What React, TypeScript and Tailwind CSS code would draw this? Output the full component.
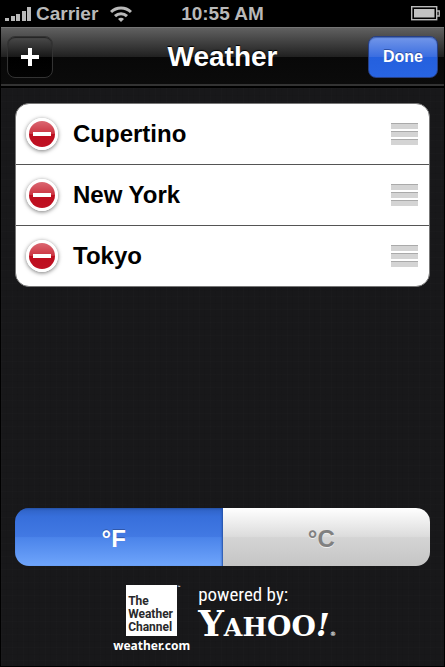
import { useState } from "react";

const cities = ["Cupertino", "New York", "Tokyo"];

function StatusBar() {
  return (
    <div className="grid h-[27px] grid-cols-[1fr_auto_1fr] items-center bg-black pr-1 pl-1 text-[19px] leading-none font-bold text-[#b9b9b9]">
      <div className="flex items-center">
        <svg width="27" height="14" viewBox="0 0 27 14" fill="#b9b9b9" aria-label="Signal strength" role="img">
          <rect x="0" y="11" width="4" height="3" />
          <rect x="6" y="9" width="4" height="5" />
          <rect x="11" y="7" width="4" height="7" />
          <rect x="17" y="4" width="4" height="10" />
          <rect x="22" y="0" width="4" height="14" />
        </svg>
        <span className="ml-1">Carrier</span>
        <svg className="ml-3" width="22" height="16" viewBox="0 0 22 16" fill="none" stroke="#b9b9b9" strokeWidth="3" aria-label="Wi-Fi" role="img">
          <path d="M1 6C6.500 0.600 15.500 0.600 21 6" />
          <path d="M5 10.200C8.500 6.800 13.500 6.800 17 10.200" />
          <path d="M8 13C9.800 11.300 12.200 11.300 14 13L11 16Z" fill="#b9b9b9" stroke="none" />
        </svg>
      </div>
      <span>10:55 AM</span>
      <svg className="justify-self-end" width="29" height="15" viewBox="0 0 29 15" aria-label="Battery" role="img">
        <rect x="0.700" y="0.700" width="25" height="13" fill="none" stroke="#b9b9b9" strokeWidth="1.400" />
        <rect x="3" y="3" width="20.500" height="8.500" fill="#c2c2c2" />
        <path d="M26 5h2.300v5H26" fill="none" stroke="#b9b9b9" strokeWidth="1.300" />
      </svg>
    </div>
  );
}

function NavBar() {
  return (
    <header className="grid h-[61px] grid-cols-[1fr_auto_1fr] items-center border-t border-b-2 border-t-[#757575] border-b-black bg-[linear-gradient(#606060_0%,#202020_50%,#080808_50%,#0b0b0b_97%,#333_97%)] px-[6px]">
      <button
        type="button"
        aria-label="Add city"
        className="flex h-[42px] w-[46px] items-center justify-center rounded-lg border border-[#333] bg-[linear-gradient(#4b4b4b,#171717_50%,#000_50%,#030303)] shadow-[inset_0_1px_1px_#222]"
      >
        <svg width="18" height="18" viewBox="0 0 18 18" stroke="#fff" strokeWidth="4">
          <path d="M9 0V18M0 9H18" />
        </svg>
      </button>
      <h1 className="text-[28px] leading-8 font-bold text-white [text-shadow:0_-1px_1px_#000]">Weather</h1>
      <button
        type="button"
        className="h-[42px] w-[70px] justify-self-end rounded-lg border border-[#263f85] bg-[linear-gradient(#7397e9,#3a6de0_50%,#2460de_50%,#2864e2)] text-base font-bold text-white shadow-[inset_0_1px_1px_#4263af] [text-shadow:0_-1px_0_#2c50a5]"
      >
        Done
      </button>
    </header>
  );
}

function CityRow({ name }: { name: string }) {
  return (
    <li className="flex h-[61px] items-center border-b border-[#555] pr-[11px] pl-[10px] last:h-[60px] last:border-b-0">
      <button
        type="button"
        aria-label={`Delete ${name}`}
        className="flex size-8 items-center justify-center rounded-full border-2 border-white bg-[linear-gradient(#dc6b75,#cb3340_50%,#bd0d1d_50%,#c01224)] bg-clip-content p-px shadow-[0_1px_4px_#777]"
      >
        <span className="h-1 w-[18px] bg-white" />
      </button>
      <span className="ml-[15px] text-2xl leading-7 font-bold text-black">{name}</span>
      <button type="button" aria-label={`Reorder ${name}`} className="ml-auto flex w-[27px] flex-col gap-[2px]">
        <span className="h-[6px] border-t border-[#aaa] bg-[#d4d4d4]" />
        <span className="h-[6px] border-t border-[#aaa] bg-[#d4d4d4]" />
        <span className="h-[6px] border-t border-[#aaa] bg-[#d4d4d4]" />
      </button>
    </li>
  );
}

function UnitSwitch() {
  const [unit, setUnit] = useState("F");
  const on = "bg-[linear-gradient(#2f62c4_0%,#376fdb_15%,#4279e3_49%,#4b84ea_51%,#6fa5fb_100%)] text-white shadow-[inset_-1px_1px_2px_#2450a5] [text-shadow:0_-1px_0_#3158a8]";
  const off = "bg-[linear-gradient(#fff,#dcdcdc_49%,#d4d4d4_51%,#c5c5c5)] text-[#808080] [text-shadow:0_1px_0_#eee]";
  return (
    <fieldset aria-label="Temperature unit" className="flex h-[58px] overflow-hidden rounded-[14px]">
      {["F", "C"].map((u) => (
        <label key={u} className={`relative flex flex-1 items-center justify-center pt-1 pr-[10px] text-2xl leading-none font-bold ${unit === u ? on : off}`}>
          <input type="radio" name="unit" className="sr-only" checked={unit === u} onChange={() => setUnit(u)} />
          °{u}
        </label>
      ))}
    </fieldset>
  );
}

function Credits() {
  return (
    <footer className="flex justify-center gap-2 pt-[19px] pl-1 text-white">
      <a href="#weather" className="flex flex-col items-center">
        <span className="relative flex h-[51px] w-[51px] flex-col justify-end bg-white pb-[2px] pl-[2px] font-['Roboto'] text-xs leading-[13px] font-bold text-[#29292b]">
          <span>The</span>
          <span>Weather</span>
          <span>Channel</span>
          <span className="absolute top-0 left-full text-[5px] leading-[5px] text-white">™</span>
        </span>
        <span className="mt-[2px] font-['Noto_Sans'] text-xs leading-4 font-bold">weather.com</span>
      </a>
      <a href="#yahoo" className="flex flex-col">
        <span className="font-['Roboto_Condensed','Roboto'] text-[19px] leading-5">powered by:</span>
        <span className="mt-1 flex h-7 items-baseline font-['DejaVu_Serif'] leading-7 font-bold">
          <span className="text-[36px]">Y</span>
          <span className="text-[24px]">A</span>
          <span className="text-[26px]">H</span>
          <span className="text-[28px]">O</span>
          <span className="text-[28px]">O</span>
          <span className="text-[32px] italic">!</span>
          <span className="text-[6px]">®</span>
        </span>
      </a>
    </footer>
  );
}

export default function App() {
  return (
    <div className="flex min-h-screen flex-col border-x border-b border-black bg-[#18181a] font-['Liberation_Sans',Arial,sans-serif]">
      <StatusBar />
      <NavBar />
      <main className="flex flex-1 flex-col bg-[repeating-linear-gradient(90deg,#ffffff02_0_1px,transparent_1px_5px,#00000009_5px_6px,transparent_6px_11px),repeating-linear-gradient(#ffffff02_0_1px,transparent_1px_7px,#0000000a_7px_8px,transparent_8px_13px)] px-[14px] pt-[15px] pb-3">
        <ul className="overflow-hidden rounded-[14px] border border-[#777] bg-white">
          {cities.map((c) => (
            <CityRow key={c} name={c} />
          ))}
        </ul>
        <div className="mt-auto">
          <UnitSwitch />
          <Credits />
        </div>
      </main>
    </div>
  );
}
